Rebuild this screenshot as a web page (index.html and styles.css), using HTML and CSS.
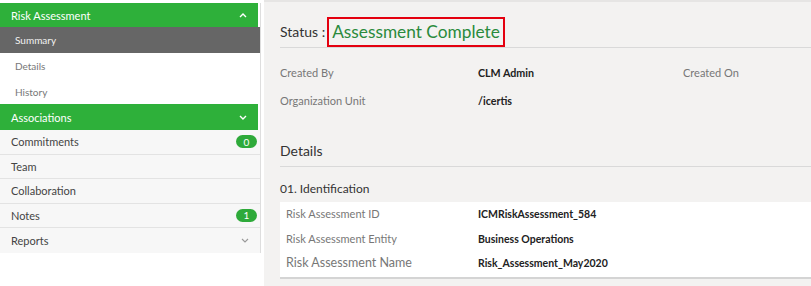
FILE: index.html
```html
<!DOCTYPE html>
<html lang="en">
<head>
<meta charset="utf-8">
<title>Risk Assessment</title>
<link rel="stylesheet" href="styles.css">
</head>
<body>
<div class="page">
  <aside class="sidebar">
    <div class="group-head">
      <span>Risk Assessment</span>
      <svg class="chev" width="8" height="5" viewBox="0 0 8 5"><polyline points="1,4 4,1 7,4" fill="none" stroke="#fff" stroke-width="1.4"/></svg>
    </div>
    <div class="sub active">Summary</div>
    <div class="sub">Details</div>
    <div class="sub last">History</div>
    <div class="group-head tall">
      <span>Associations</span>
      <svg class="chev" width="8" height="5" viewBox="0 0 8 5"><polyline points="1,1 4,4 7,1" fill="none" stroke="#fff" stroke-width="1.4"/></svg>
    </div>
    <div class="item"><span>Commitments</span><span class="badge">0</span></div>
    <div class="item"><span>Team</span></div>
    <div class="item"><span>Collaboration</span></div>
    <div class="item"><span>Notes</span><span class="badge">1</span></div>
    <div class="item last">
      <span>Reports</span>
      <svg class="chev" width="8" height="5" viewBox="0 0 8 5"><polyline points="1,1 4,4 7,1" fill="none" stroke="#999" stroke-width="1.1"/></svg>
    </div>
  </aside>

  <main class="main">
    <div class="status">
      <span class="status-label">Status :</span>
      <span class="status-box">Assessment Complete</span>
    </div>

    <div class="info">
      <span class="label">Created By</span>
      <span class="value">CLM Admin</span>
      <span class="label">Created On</span>
      <span class="label">Organization Unit</span>
      <span class="value">/icertis</span>
      <span></span>
    </div>

    <h2 class="section-title">Details</h2>
    <h3 class="subsection">01. Identification</h3>

    <div class="card">
      <div class="row r1"><span class="label">Risk Assessment ID</span><span class="value">ICMRiskAssessment_584</span></div>
      <div class="row r2"><span class="label">Risk Assessment Entity</span><span class="value">Business Operations</span></div>
      <div class="row r3"><span class="label big">Risk Assessment Name</span><span class="value">Risk_Assessment_May2020</span></div>
    </div>
  </main>
</div>
</body>
</html>
```

FILE: styles.css
```css
* { box-sizing: border-box; }

body {
  margin: 0;
  background: #ffffff;
  font-family: Lato, "Open Sans", "Liberation Sans", sans-serif;
  color: #333;
}

.page {
  display: flex;
  gap: 3px;
  height: 286px;
  overflow: hidden;
}

/* Sidebar */
.sidebar {
  width: 261px;
  flex: none;
  align-self: flex-start;
  margin-top: 3px;
  border-right: 1px solid #dedede;
}

.group-head {
  display: flex;
  align-items: center;
  justify-content: space-between;
  height: 24px;
  padding: 0 11px 0 11px;
  background: #2eb03a;
  color: #fff;
  font-size: 11px;
  margin-right: 2px;
}
.group-head.tall { height: 26px; }

.chev { display: block; }

.sub {
  display: flex;
  align-items: center;
  height: 26px;
  padding-left: 15px;
  font-size: 10px;
  color: #777;
  background: #fff;
}
.sub.last { height: 25px; }
.sub.active {
  background: #666666;
  color: #f2f2f2;
}

.item {
  display: flex;
  align-items: center;
  justify-content: space-between;
  height: 24.5px;
  padding: 0 3px 0 11px;
  font-size: 11px;
  color: #444;
  background: #f7f7f7;
  border-bottom: 1px solid #e3e3e3;
}
.item.last {
  border-bottom: none;
  padding-right: 11px;
}

.badge {
  display: flex;
  align-items: center;
  justify-content: center;
  width: 21px;
  height: 13px;
  border-radius: 7px;
  background: #2eaa3a;
  color: #fff;
  font-size: 10px;
}

/* Main */
.main {
  flex: 1;
  background: #f3f2f1;
  border-top: 2px solid #e6e5e4;
  padding-left: 16px;
}

.status {
  display: flex;
  align-items: flex-end;
  height: 46px;
  border-bottom: 1px solid #d9d9d9;
}
.status-label {
  font-size: 14px;
  color: #333;
  padding-bottom: 7px;
  margin-right: 2px;
}
.status-box {
  display: flex;
  align-items: center;
  height: 30px;
  padding: 0 3px 1px 3px;
  border: 2px solid #e4000f;
  color: #2a8a3c;
  font-size: 17.3px;
}

.info {
  display: grid;
  grid-template-columns: 198px 205px 1fr;
  grid-auto-rows: 28px;
  align-items: center;
  padding-top: 10px;
}

.label {
  font-size: 11px;
  color: #777;
}
.value {
  font-size: 10.7px;
  font-weight: 700;
  color: #222;
}

.section-title {
  margin: 0;
  padding-top: 27px;
  padding-bottom: 5px;
  line-height: 20px;
  font-size: 14px;
  font-weight: 400;
  color: #333;
  border-bottom: 1px solid #d9d9d9;
}

.subsection {
  margin: 0;
  padding-top: 14px;
  line-height: 16px;
  height: 35px;
  font-size: 12px;
  font-weight: 400;
  color: #333;
}

.card {
  background: #fff;
  border-bottom: 2px solid #d4d4d4;
  padding: 0 0 4px 6px;
}
.row {
  display: grid;
  grid-template-columns: 192px 1fr;
  align-items: center;
}
.row.r1 { height: 23px; }
.row.r2 { height: 27px; }
.row.r3 { height: 21px; }
.row .label { font-size: 11px; }
.row .label.big { font-size: 12.5px; }
.row .value { font-size: 10.5px; }
```
